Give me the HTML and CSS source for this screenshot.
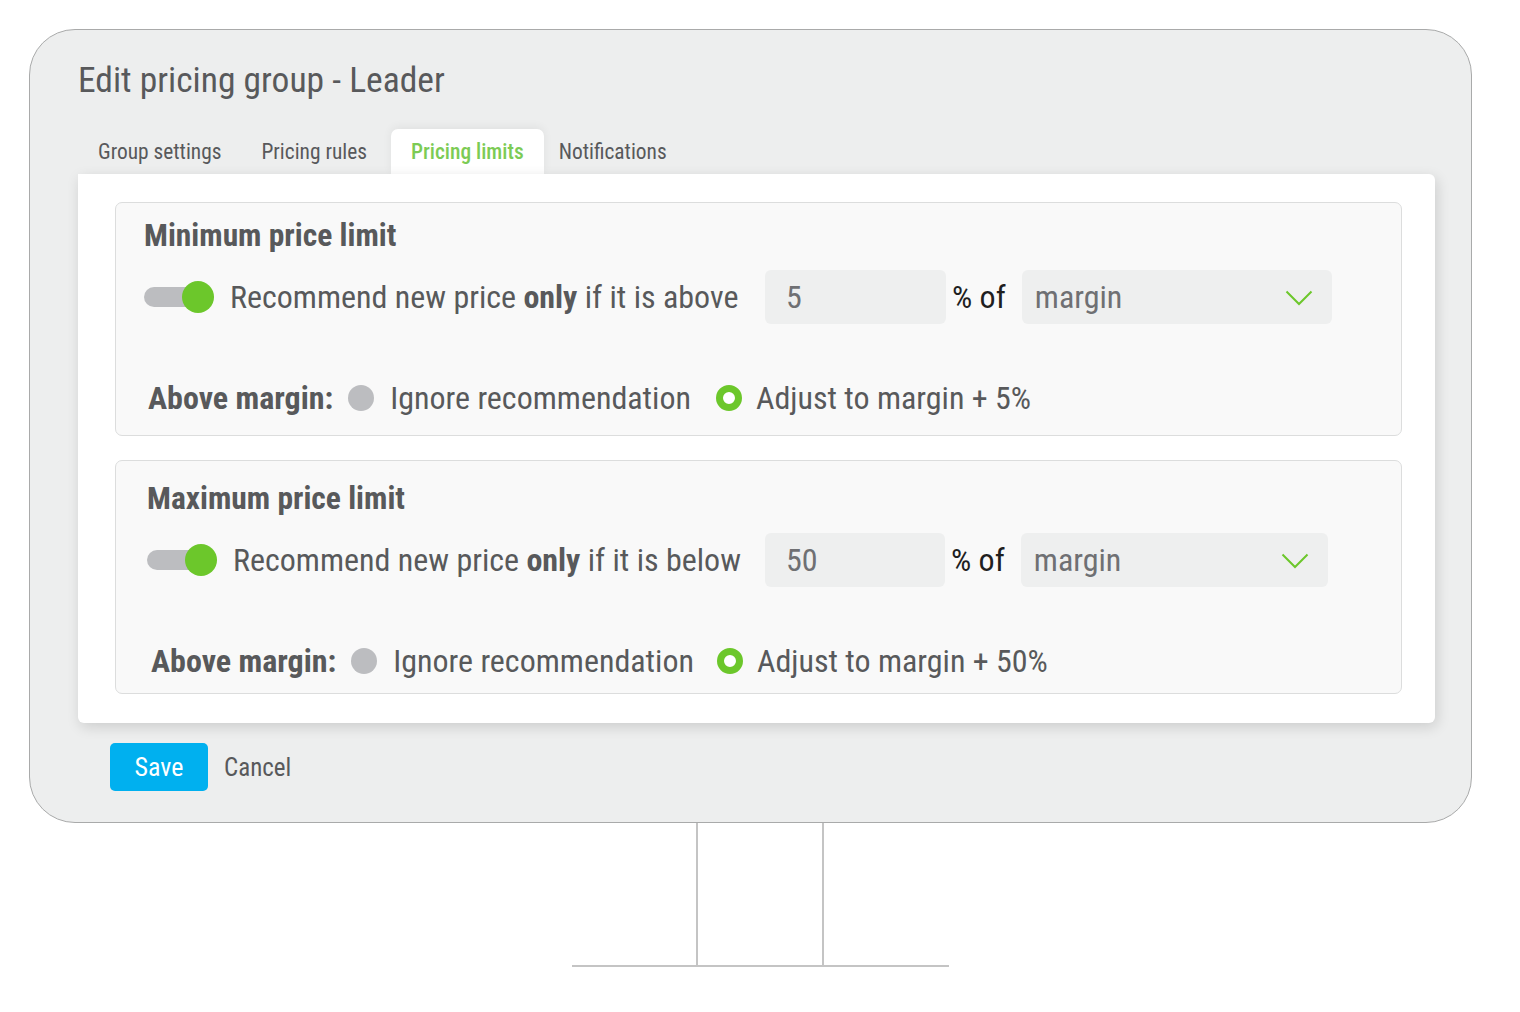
FILE: index.html
```html
<!DOCTYPE html>
<html lang="en">
<head>
<meta charset="utf-8">
<title>Edit pricing group - Leader</title>
<link rel="stylesheet" href="styles.css">
</head>
<body>
<div class="screen">
  <div class="monitor">
    <h1 class="title">Edit pricing group - Leader</h1>
    <div class="tabs">
      <div class="tab">Group settings</div>
      <div class="tab">Pricing rules</div>
      <div class="tab active">Pricing limits</div>
      <div class="tab">Notifications</div>
    </div>
    <div class="panel">
      <section class="card card-min">
        <h2 class="card-title">Minimum price limit</h2>
        <div class="rule-row">
          <div class="rule-label">
            <span class="toggle"><span class="knob"></span></span>
            <span>Recommend new price <b>only</b> if it is above</span>
          </div>
          <div class="input">5</div>
          <span class="pct">% of</span>
          <div class="select">
            <span>margin</span>
            <svg class="chev" width="28" height="16" viewBox="0 0 28 16"><path d="M1.5 1.5 L14 14 L26.5 1.5" fill="none" stroke="#6cc72b" stroke-width="2"/></svg>
          </div>
        </div>
        <div class="radio-row">
          <b class="radio-label">Above margin:</b>
          <span class="radio"></span>
          <span class="opt">Ignore recommendation</span>
          <span class="radio on"></span>
          <span class="opt">Adjust to margin + 5%</span>
        </div>
      </section>
      <section class="card card-max">
        <h2 class="card-title">Maximum price limit</h2>
        <div class="rule-row">
          <div class="rule-label">
            <span class="toggle"><span class="knob"></span></span>
            <span>Recommend new price <b>only</b> if it is below</span>
          </div>
          <div class="input">50</div>
          <span class="pct">% of</span>
          <div class="select">
            <span>margin</span>
            <svg class="chev" width="28" height="16" viewBox="0 0 28 16"><path d="M1.5 1.5 L14 14 L26.5 1.5" fill="none" stroke="#6cc72b" stroke-width="2"/></svg>
          </div>
        </div>
        <div class="radio-row">
          <b class="radio-label">Above margin:</b>
          <span class="radio"></span>
          <span class="opt">Ignore recommendation</span>
          <span class="radio on"></span>
          <span class="opt">Adjust to margin + 50%</span>
        </div>
      </section>
    </div>
    <div class="actions">
      <button class="btn-save" type="button">Save</button>
      <span class="cancel">Cancel</span>
    </div>
  </div>
  <div class="stand"></div>
  <div class="base"></div>
</div>
</body>
</html>
```

FILE: styles.css
```css
* { box-sizing: border-box; }

html, body {
  margin: 0;
  padding: 0;
  background: #ffffff;
}

body {
  font-family: "Roboto Condensed", Roboto, "Liberation Sans", sans-serif;
  font-stretch: condensed;
  color: #58595b;
}

.screen {
  width: 1520px;
  height: 1012px;
  padding-top: 29px;
  display: flex;
  flex-direction: column;
}

.monitor {
  margin-left: 29px;
  width: 1443px;
  height: 794px;
  border: 1px solid #a9aaaa;
  border-radius: 46px;
  background: #edeeee;
  padding: 28px 0 0 48px;
}

.title {
  margin: 0;
  font-size: 35.5px;
  line-height: 44px;
  font-weight: 400;
  color: #58595b;
}

.tabs {
  display: flex;
  margin-top: 27px;
  height: 45px;
  align-items: stretch;
}

.tab {
  padding: 0 20px;
  font-size: 21.4px;
  line-height: 45px;
  color: #58595b;
}

.tab.active {
  background: #ffffff;
  color: #7ccb55;
  font-weight: 500;
  border-radius: 7px 7px 0 0;
  margin-left: 4px;
  box-shadow: 0 -2px 10px rgba(0, 0, 0, 0.06);
  position: relative;
  z-index: 1;
}

.tab.active + .tab { padding-left: 15px; }

.panel {
  width: 1357px;
  height: 549px;
  background: #ffffff;
  border-radius: 0 6px 6px 6px;
  box-shadow: 2px 4px 14px rgba(0, 0, 0, 0.14);
  padding: 28px 33px 0 37px;
  display: flex;
  flex-direction: column;
  gap: 24px;
  position: relative;
  z-index: 2;
}

.card {
  background: #f9f9f9;
  border: 1px solid #dcdddd;
  border-radius: 7px;
  height: 234px;
  padding: 13px 0 0 28px;
}

.card-max {
  height: 234px;
  padding: 18px 0 0 31px;
}

.card-title {
  margin: 0;
  font-size: 31.5px;
  line-height: 40px;
  font-weight: 700;
  color: #58595b;
}

.rule-row {
  display: flex;
  align-items: center;
  margin-top: 14px;
  height: 54px;
  font-size: 32px;
}

.rule-label {
  display: flex;
  align-items: center;
  width: 621px;
  gap: 16px;
  white-space: nowrap;
}

.card-max .rule-label { width: 618px; }

.rule-label b { font-weight: 700; }

.toggle {
  position: relative;
  display: inline-block;
  width: 70px;
  height: 32px;
  flex: none;
}

.toggle::before {
  content: "";
  position: absolute;
  left: 0;
  top: 6px;
  width: 62px;
  height: 20px;
  border-radius: 10px;
  background: #bcbdc0;
}

.knob {
  position: absolute;
  right: 0;
  top: 0;
  width: 32px;
  height: 32px;
  border-radius: 50%;
  background: #6cc72b;
}

.input {
  width: 181px;
  height: 54px;
  background: #eeefef;
  border-radius: 6px;
  padding-left: 21px;
  line-height: 54px;
  font-size: 32px;
  color: #6f7073;
}

.card-max .input { width: 180px; }

.pct {
  margin: 0 16px 0 6px;
  color: #1f1f1f;
}

.select {
  width: 310px;
  height: 54px;
  background: #eeefef;
  border-radius: 6px;
  padding: 0 19px 0 13px;
  display: flex;
  align-items: center;
  justify-content: space-between;
  color: #6f7073;
}

.card-max .select { width: 307px; }

.chev { display: block; margin-top: 2px; }

.radio-row {
  display: flex;
  align-items: center;
  margin-top: 54px;
  height: 40px;
  font-size: 32px;
  padding-left: 4px;
  white-space: nowrap;
}

.radio-label {
  font-weight: 700;
  color: #58595b;
  margin-right: 15px;
}

.radio {
  width: 26px;
  height: 26px;
  border-radius: 50%;
  background: #bcbdc0;
  flex: none;
  margin-right: 16px;
}

.radio.on {
  background: #ffffff;
  border: 7px solid #6cc72b;
  margin-left: 25px;
  margin-right: 14px;
}

.card-max .radio.on { margin-left: 23px; }

.opt { color: #58595b; }

.actions {
  display: flex;
  align-items: center;
  margin-top: 20px;
  margin-left: 32px;
  gap: 16px;
}

.btn-save {
  width: 98px;
  height: 48px;
  border: none;
  border-radius: 5px;
  background: #00b0ef;
  color: #ffffff;
  font-family: inherit;
  font-stretch: condensed;
  font-size: 26px;
  padding: 0;
}

.cancel {
  font-size: 25px;
  color: #58595b;
}

.stand {
  align-self: center;
  width: 128px;
  height: 142px;
  border-left: 2px solid #c4c4c4;
  border-right: 2px solid #c4c4c4;
}

.base {
  align-self: center;
  width: 377px;
  height: 2px;
  background: #c4c4c4;
}
```
